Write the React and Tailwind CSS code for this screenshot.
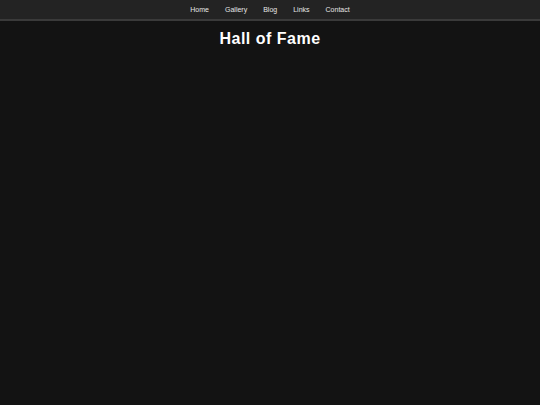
export default function App() {
  const links = ["Home", "Gallery", "Blog", "Links", "Contact"];
  return (
    <div className="min-h-[405px] w-full bg-[#131313] font-['Liberation_Sans',Arial,sans-serif]">
      <nav className="h-[21px] bg-[#232323] border-b-2 border-[#3a3a3a] flex justify-center items-center">
        <ul className="flex">
          {links.map((l) => (
            <li key={l} className="px-2 text-[7px] leading-[19px] text-[#e6e6e6]">
              {l}
            </li>
          ))}
        </ul>
      </nav>
      <h1 className="text-center text-white font-bold text-[16px] tracking-[0.5px] leading-[18px] pt-[9px]">
        Hall of Fame
      </h1>
    </div>
  );
}
